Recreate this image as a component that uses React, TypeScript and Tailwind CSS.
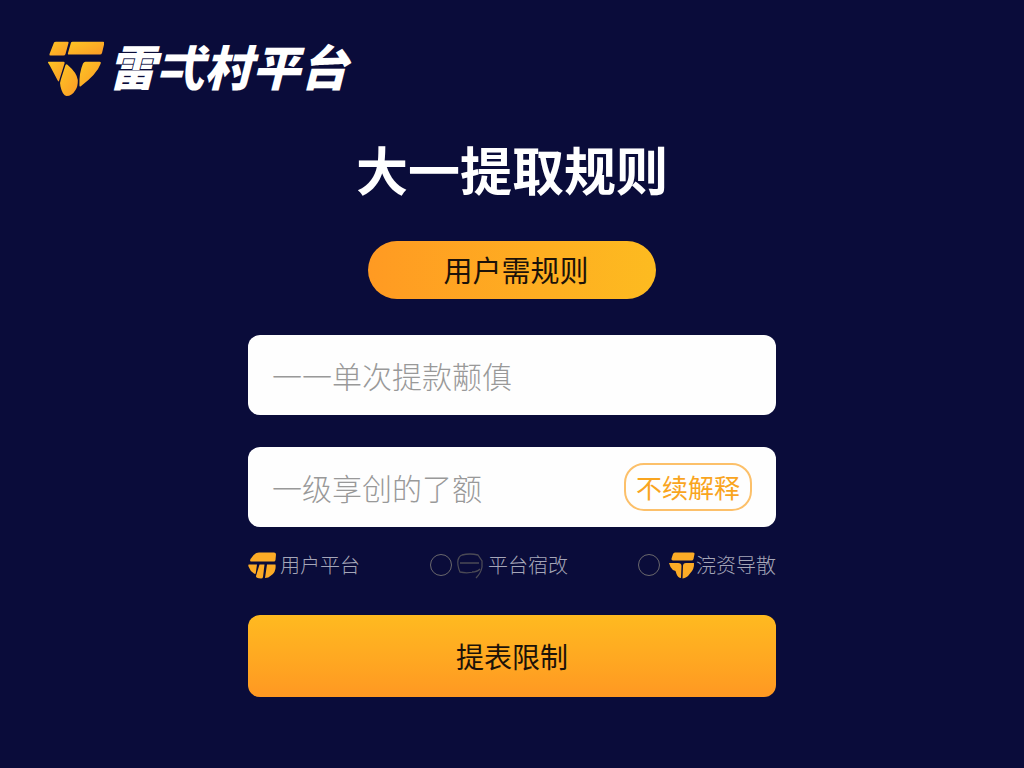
import React, { useState } from 'react';

const LogoIcon = ({ className }: { className: string }) => (
  <svg viewBox="0 0 56 56" className={className} aria-hidden="true">
    <defs>
      <linearGradient id="logoFill" x1="0" y1="0" x2="1" y2="1">
        <stop offset="0" stopColor="#fdc524" />
        <stop offset="1" stopColor="#fb9a26" />
      </linearGradient>
    </defs>
    <g fill="url(#logoFill)">
      <path d="M6 1.500Q6.500 .7 8 .7H19.500Q21 .7 20.500 2L17.500 13Q17 14.500 15.500 14.500H2.500Q1 14.500 1.500 13Z" />
      <path d="M23 1.500Q23.300.7 24.500.7H55Q56.800.7 56.300 2.500L54 12Q53.500 13.500 52 13.500H21Q19.500 13.500 20 12Z" />
      <path d="M.5 20.700H15.500Q17 20.700 16.500 22.500L11 40Q10.500 41 9.700 39.500L1.500 24Q-1 20.700 .5 20.700Z" />
      <path d="M17.500 24Q18.300 22.500 19.500 23.800Q29 32 29.800 39Q30 45.500 27.500 49Q24 55 18.500 55Q14.500 54.500 12.500 45.500Q11.500 41.500 13 38Z" />
      <path d="M37.500 20.700H51.500Q53.500 20.700 52.500 23Q49 33 32.500 45.500Q31.300 46 31.400 44Q31 32 35 22.500Q36 20.700 37.500 20.700Z" />
    </g>
  </svg>
);

const RoundMark = () => (
  <svg viewBox="0 0 28 28" className="h-7 w-7" aria-hidden="true">
    <g fill="#fcab26">
      <path d="M2.500 8Q6 1.500 11 1.500H26Q28 1.500 28 3.500L27.500 9Q27.200 10.500 26 10.500H3Q1.500 10.500 2.500 8Z" />
      <path d="M.8 13.500H9L7.800 22Q7.500 23.500 6 22.500Q2 20 .5 15.500Q0 13.500 .8 13.500Z" />
      <path d="M11.500 13.500H16.500L15 26Q14.800 27.500 13 27.500Q7.500 27 8 25Z" />
      <path d="M19 13.500H27.500Q28.500 21 23 24.500Q20.500 27 17 27Z" />
    </g>
  </svg>
);

const ShieldMark = () => (
  <svg viewBox="0 0 28 28" className="h-7 w-7" aria-hidden="true">
    <g fill="#fcab26">
      <path d="M5 3Q5.500 1.500 7 1.500H25Q27 1.500 26.500 3L25.500 8Q25 9.500 23.500 9.500H5Q3 9.500 3.500 7.500Z" />
      <path d="M1 12H10Q13.500 12 13.500 15L13 27Q10 27 8.500 23L7.500 20Q4 19 2.500 16Z" />
      <path d="M18 12H26Q26.500 18 22 22.500Q19 27 14.500 27.500L15 15Q15 12 18 12Z" />
    </g>
  </svg>
);

const BubbleMark = () => (
  <svg
    viewBox="0 0 28 28"
    className="h-7 w-7"
    fill="none"
    stroke="#4b4a55"
    strokeWidth="1.300"
    aria-hidden="true"
  >
    <path d="M6 4Q14 2 22 4L26 10V16Q25 22 20 27M22 20Q12 23 4 21Q1 14 2 9Q3 5 6 4M4 12H23M24 18Q21 21 16 21" />
  </svg>
);

const radioClass =
  'h-[22px] w-[22px] appearance-none rounded-full border border-[#6a686c] checked:bg-[#fcab26]';

const inputClass =
  'h-20 w-full rounded-xl bg-[#fefefe] px-6 text-[30px] font-light text-[#333] placeholder:text-[#999] outline-none';

const App = () => {
  const [amount, setAmount] = useState('');
  const [level, setLevel] = useState('');

  const handleSubmit = (e: React.FormEvent) => {
    e.preventDefault();
  };

  return (
    <div className="min-h-screen bg-[#0a0c3a] font-['Noto_Sans_CJK_SC',sans-serif]">
      <header className="flex items-start gap-1 px-12 pt-[41px]">
        <LogoIcon className="h-14 w-14" />
        <span className="text-[48px] leading-12 font-black text-white italic">
          雷弌村平台
        </span>
      </header>

      <main className="mx-auto flex w-full max-w-[528px] flex-col items-center pt-10">
        <h1 className="text-[52px] leading-16 font-bold text-white">
          大一提取规则
        </h1>
        <button
          type="button"
          className="mt-10 h-[58px] w-72 rounded-full bg-linear-to-r from-[#ff9a22] to-[#fdbb20] pl-2 text-[29px] text-[#1c1209]"
        >
          用户需规则
        </button>

        <form onSubmit={handleSubmit} className="mt-9 w-full">
          <input
            type="text"
            aria-label="单次提款"
            placeholder="一一单次提款颟傎"
            value={amount}
            onChange={(e) => setAmount(e.target.value)}
            className={inputClass}
          />

          <div className="relative mt-8">
            <input
              type="text"
              aria-label="一级"
              placeholder="一级享创的了额"
              value={level}
              onChange={(e) => setLevel(e.target.value)}
              className={inputClass}
            />
            <button
              type="button"
              className="absolute top-4 right-6 h-12 w-32 rounded-[20px] border-2 border-[#fcc06a] text-[26px] leading-10 text-[#f9a51f]"
            >
              不续解释
            </button>
          </div>

          <div className="mt-6 flex items-center justify-between text-[20px] leading-7 font-light text-[#a5a6b8]">
            <span className="flex items-center gap-1">
              <RoundMark />
              用户平台
            </span>
            <label className="flex items-center gap-1">
              <input type="radio" name="platform" className={radioClass} />
              <BubbleMark />
              平台宿改
            </label>
            <label className="flex items-center">
              <input type="radio" name="platform" className={radioClass} />
              <span className="ml-2">
                <ShieldMark />
              </span>
              浣资导散
            </label>
          </div>

          <button
            type="submit"
            className="mt-9 h-[82px] w-full rounded-xl bg-linear-to-b from-[#ffba20] to-[#ff9822] text-[28px] text-[#1c1209]"
          >
            提表限制
          </button>
        </form>
      </main>
    </div>
  );
};

export default App;
